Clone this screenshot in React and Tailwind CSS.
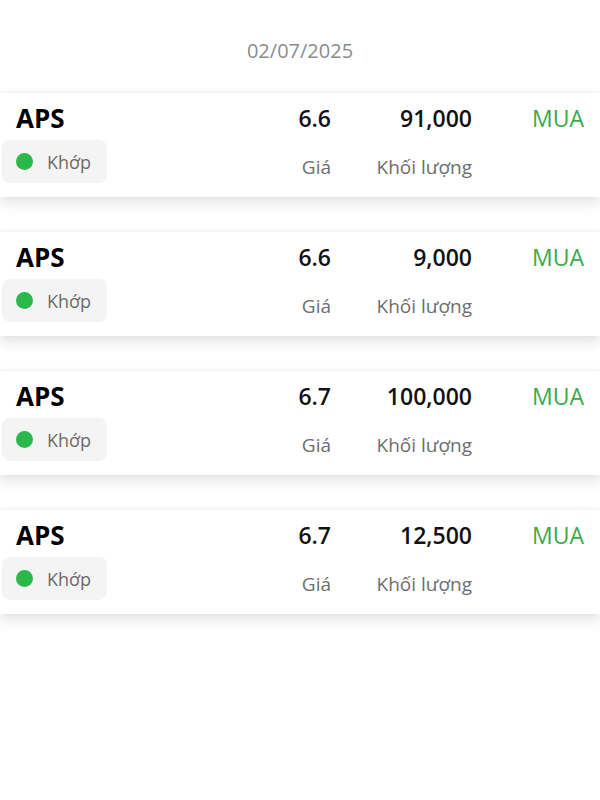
import React from "react";

const rows = [
  { sym: "APS", price: "6.6", vol: "91,000" },
  { sym: "APS", price: "6.6", vol: "9,000" },
  { sym: "APS", price: "6.7", vol: "100,000" },
  { sym: "APS", price: "6.7", vol: "12,500" },
];

function Card({ r }) {
  return (
    <div className="bg-white shadow-[0_6px_12px_rgba(0,0,0,0.11),0_-1px_4px_rgba(0,0,0,0.05)] h-[104px] pl-[2px] pr-[16px] flex flex-col">
      <div className="flex items-center pt-[10px] h-[40px]">
        <div className="flex-1 pl-[14px] text-[26px] font-bold text-black leading-[30px]">{r.sym}</div>
        <div className="w-[80px] text-right text-[23px] font-semibold text-[#111] leading-[30px]">{r.price}</div>
        <div className="w-[141px] text-right text-[23px] font-semibold text-[#111] leading-[30px]">{r.vol}</div>
        <div className="w-[112px] text-right text-[23px] text-[#3ba94d] leading-[30px]">MUA</div>
      </div>
      <div className="flex items-start mt-[7px]">
        <div className="flex-1">
          <div className="w-[105px] h-[43px] rounded-lg bg-[#f4f4f4] flex items-center pl-[14px] gap-[14px]">
            <span className="w-[17px] h-[17px] rounded-full bg-[#2bb84a] shrink-0"></span>
            <span className="text-[18px] text-[#6b6b6b] leading-none">Khớp</span>
          </div>
        </div>
        <div className="w-[80px] text-right text-[19px] text-[#6e6e6e] leading-[26px] pt-[14px]">Giá</div>
        <div className="w-[141px] text-right text-[19px] text-[#6e6e6e] leading-[26px] pt-[14px]">Khối lượng</div>
        <div className="w-[112px]"></div>
      </div>
    </div>
  );
}

export default function App() {
  return (
    <div className="w-[600px] h-[800px] bg-white" style={{ fontFamily: '"Open Sans", "Noto Sans", sans-serif' }}>
      <div className="pt-[37px] h-[93px] text-center text-[20px] leading-[28px] text-[#8c8c8c]">02/07/2025</div>
      <div className="flex flex-col gap-[35px]">
        {rows.map((r, i) => (
          <Card key={i} r={r} />
        ))}
      </div>
    </div>
  );
}
